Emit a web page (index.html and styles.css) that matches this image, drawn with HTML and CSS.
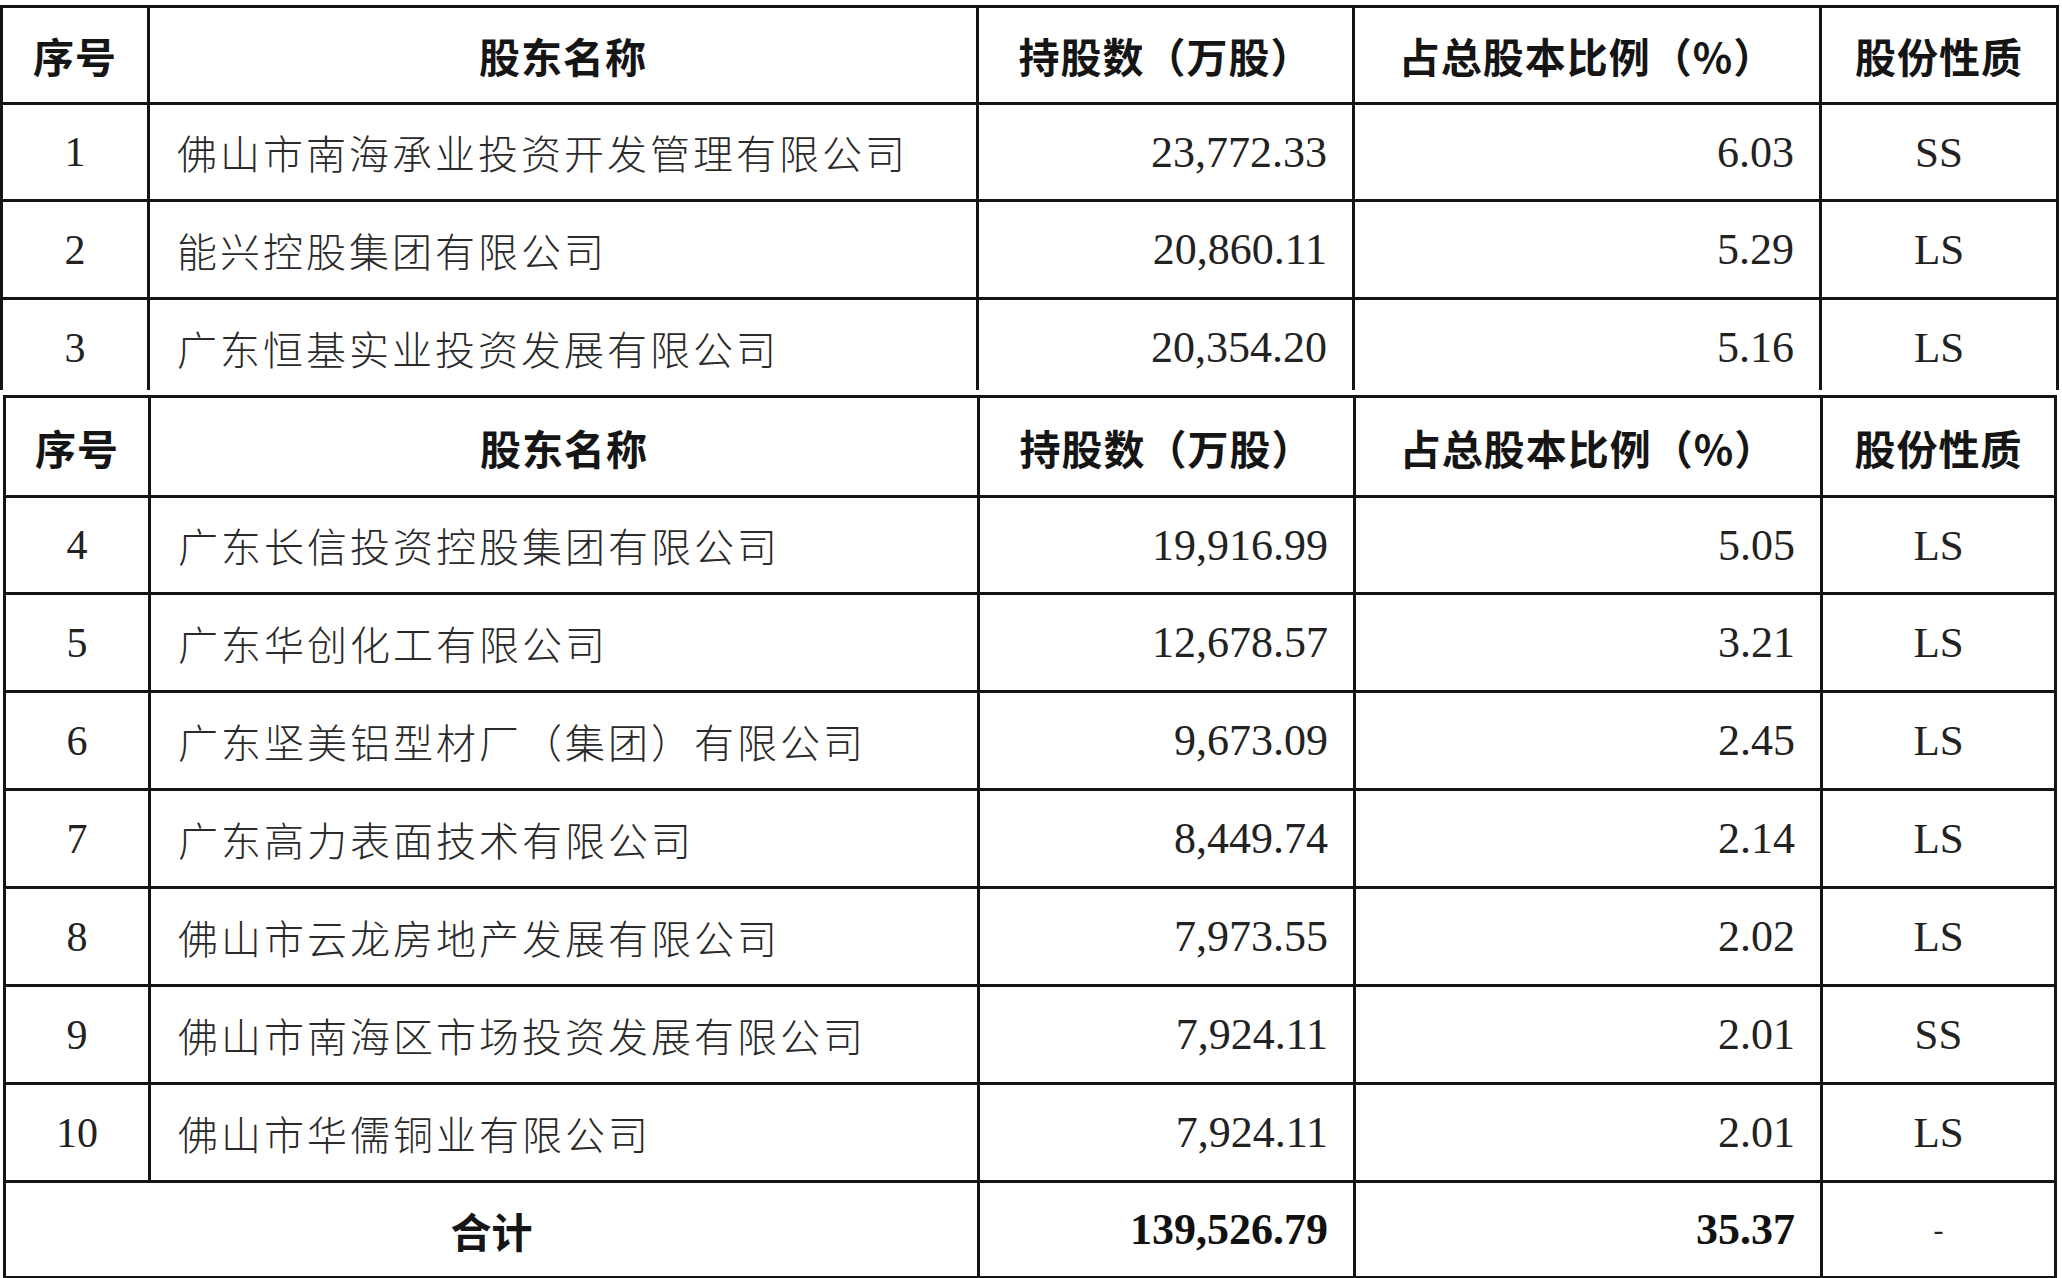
FILE: index.html
```html
<!DOCTYPE html>
<html lang="zh-CN">
<head>
<meta charset="utf-8">
<title>前十大股东</title>
<link rel="stylesheet" href="styles.css">
</head>
<body>
<div class="page">
  <div class="clip">
    <table class="grid grid-a">
      <colgroup>
        <col class="c1a"><col class="c2"><col class="c3"><col class="c4"><col class="c5a">
      </colgroup>
      <tr class="head h-a">
        <th>序号</th><th>股东名称</th><th>持股数（万股）</th><th>占总股本比例（%）</th><th>股份性质</th>
      </tr>
      <tr class="r97"><td class="idx">1</td><td class="name">佛山市南海承业投资开发管理有限公司</td><td class="num">23,772.33</td><td class="num">6.03</td><td class="kind">SS</td></tr>
      <tr class="r98"><td class="idx">2</td><td class="name">能兴控股集团有限公司</td><td class="num">20,860.11</td><td class="num">5.29</td><td class="kind">LS</td></tr>
      <tr class="r98"><td class="idx">3</td><td class="name">广东恒基实业投资发展有限公司</td><td class="num">20,354.20</td><td class="num">5.16</td><td class="kind">LS</td></tr>
    </table>
  </div>
  <table class="grid grid-b">
    <colgroup>
      <col class="c1b"><col class="c2"><col class="c3"><col class="c4"><col class="c5b">
    </colgroup>
    <tr class="head h-b">
      <th>序号</th><th>股东名称</th><th>持股数（万股）</th><th>占总股本比例（%）</th><th>股份性质</th>
    </tr>
    <tr class="r97"><td class="idx">4</td><td class="name">广东长信投资控股集团有限公司</td><td class="num">19,916.99</td><td class="num">5.05</td><td class="kind">LS</td></tr>
    <tr class="r98"><td class="idx">5</td><td class="name">广东华创化工有限公司</td><td class="num">12,678.57</td><td class="num">3.21</td><td class="kind">LS</td></tr>
    <tr class="r98"><td class="idx">6</td><td class="name">广东坚美铝型材厂（集团）有限公司</td><td class="num">9,673.09</td><td class="num">2.45</td><td class="kind">LS</td></tr>
    <tr class="r98"><td class="idx">7</td><td class="name">广东高力表面技术有限公司</td><td class="num">8,449.74</td><td class="num">2.14</td><td class="kind">LS</td></tr>
    <tr class="r98"><td class="idx">8</td><td class="name">佛山市云龙房地产发展有限公司</td><td class="num">7,973.55</td><td class="num">2.02</td><td class="kind">LS</td></tr>
    <tr class="r98"><td class="idx">9</td><td class="name">佛山市南海区市场投资发展有限公司</td><td class="num">7,924.11</td><td class="num">2.01</td><td class="kind">SS</td></tr>
    <tr class="r98"><td class="idx">10</td><td class="name">佛山市华儒铜业有限公司</td><td class="num">7,924.11</td><td class="num">2.01</td><td class="kind">LS</td></tr>
    <tr class="r96 total"><td class="sum-label" colspan="2">合计</td><td class="num strong">139,526.79</td><td class="num strong">35.37</td><td class="kind dash">-</td></tr>
  </table>
</div>
</body>
</html>
```

FILE: styles.css
```css
html, body {
  margin: 0;
  padding: 0;
  background: #ffffff;
}

.page {
  padding-top: 5px;
  width: 2062px;
}

.clip {
  height: 385px;
  overflow: hidden;
}

.grid {
  border-collapse: collapse;
  table-layout: fixed;
  color: #222;
  font-family: "Liberation Serif", "Noto Sans CJK SC", serif;
}

.grid-a {
  width: 2059px;
  margin-left: 0;
}

.grid-b {
  width: 2053px;
  margin-top: 5px;
  margin-left: 3px;
}

.c1a { width: 147px; }
.c1b { width: 145px; }
.c2 { width: 829px; }
.c3 { width: 376px; }
.c4 { width: 467px; }
.c5a { width: 237px; }
.c5b { width: 234px; }

.grid th,
.grid td {
  border: 3px solid #141414;
  padding: 0;
  white-space: nowrap;
  overflow: hidden;
}

.h-a { height: 97px; }
.h-b { height: 100px; }
.r96 { height: 96px; }
.r97 { height: 97px; }
.r98 { height: 98px; }

.head th {
  font-family: "Noto Sans CJK SC", sans-serif;
  font-weight: 700;
  font-size: 41px;
  letter-spacing: 1px;
  color: #151515;
  text-align: center;
  vertical-align: middle;
}

.idx {
  text-align: center;
  font-size: 42px;
}

.name {
  font-family: "Noto Sans CJK SC", sans-serif;
  font-weight: 300;
  font-size: 40px;
  letter-spacing: 3px;
  color: #2a2a2a;
  text-align: left;
  padding-left: 27px !important;
}

.num {
  text-align: right;
  font-size: 44px;
  padding-right: 25px !important;
}

.kind {
  text-align: center;
  font-size: 43px;
}

.strong {
  font-weight: 700;
  color: #111;
}

.sum-label {
  font-family: "Noto Sans CJK SC", sans-serif;
  font-weight: 700;
  font-size: 41px;
  color: #151515;
  text-align: center;
}

.dash {
  font-size: 30px;
}
```
